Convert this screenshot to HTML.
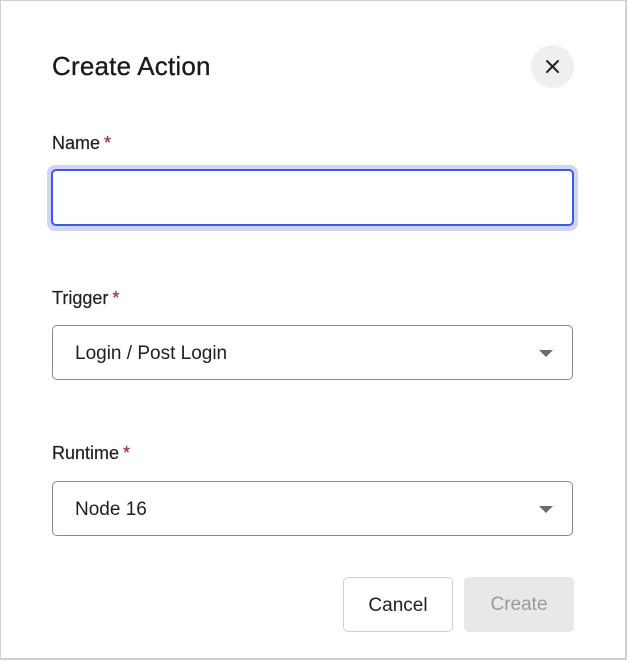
<!DOCTYPE html>
<html><head><style>
body{margin:0;width:630px;height:666px;background:#fff;font-family:"Liberation Sans",sans-serif;color:#1e1e1e;position:relative;overflow:hidden}
.frame{position:absolute;left:0;top:0;width:624px;height:657px;border:2px solid #d0d0d0;border-left-width:1px;border-top-width:1px}
.abs{position:absolute}
h1{position:absolute;left:52px;top:51px;margin:0;font-size:26px;font-weight:normal;letter-spacing:0.2px;color:#1a1a1a;-webkit-text-stroke:0.3px #1a1a1a}
.close{left:531px;top:45px;width:43px;height:43px;border-radius:50%;background:#efefef}
.lbl{position:absolute;left:52px;font-size:18px;color:#1f1f1f;-webkit-text-stroke:0.2px #1f1f1f}
.lbl span{color:#c8352b;margin-left:4px}
.sel{position:absolute;left:52px;width:519px;height:53px;border:1px solid #8a8a8a;border-radius:5px;font-size:19px;line-height:55px;box-sizing:content-box}
.sel .t{position:absolute;left:22px;top:0}
.sel .a{position:absolute;right:19px;top:24px;width:0;height:0;border-left:7px solid transparent;border-right:7px solid transparent;border-top:7px solid #6b6b6b}
.btn{position:absolute;top:577px;height:55px;border-radius:5px;font-size:19px;line-height:55px;text-align:center;box-sizing:border-box}
</style></head><body>
<div class="frame"></div>
<h1>Create Action</h1>
<div class="abs close"><svg width="43" height="43"><path d="M16 16L27 27M27 16L16 27" stroke="#222" stroke-width="2" stroke-linecap="round"/></svg></div>
<div class="lbl" style="top:133px">Name<span>*</span></div>
<div class="abs" style="left:47px;top:165px;width:531px;height:66px;border-radius:8px;background:#d0d5f5"></div>
<div class="abs" style="left:51px;top:169px;width:519px;height:53px;border:2px solid #3f59e4;border-radius:5px;background:#fff"></div>
<div class="lbl" style="top:288px">Trigger<span>*</span></div>
<div class="sel" style="top:325px"><div class="t">Login / Post Login</div><div class="a"></div></div>
<div class="lbl" style="top:443px">Runtime<span>*</span></div>
<div class="sel" style="top:481px"><div class="t">Node 16</div><div class="a"></div></div>
<div class="btn" style="left:343px;width:110px;border:1px solid #cfcfcf;color:#1f1f1f">Cancel</div>
<div class="btn" style="left:464px;width:110px;background:#e8e8e8;color:#9a9a9a">Create</div>
</body></html>
